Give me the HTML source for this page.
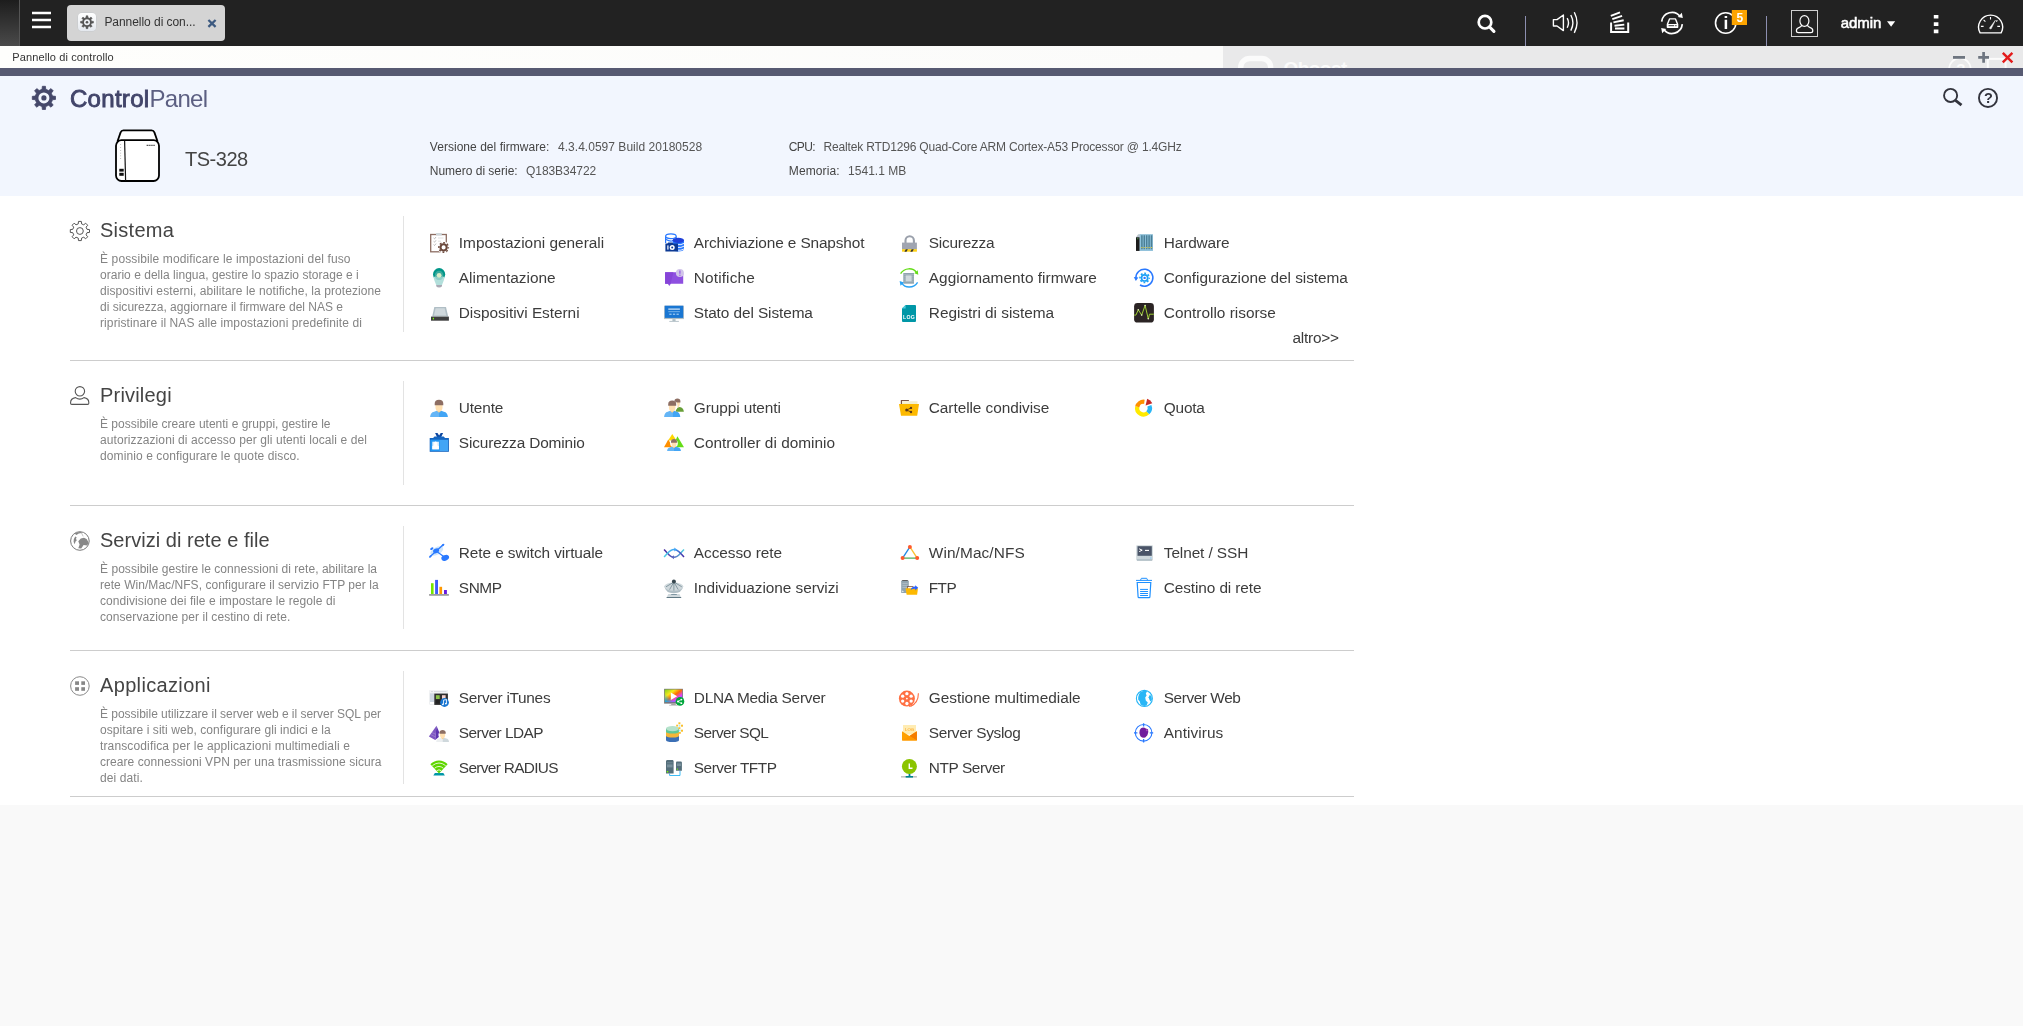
<!DOCTYPE html>
<html lang="it"><head><meta charset="utf-8"><title>Pannello di controllo</title>
<style>
html,body{margin:0;padding:0}
body{width:2023px;height:1026px;position:relative;overflow:hidden;background:#f9f9f9;font-family:"Liberation Sans",sans-serif}
.abs,.t,.ic,.vs,.hr{position:absolute}
.t{white-space:pre;line-height:20px}
#tx,#gx{left:0;top:0;width:2023px;height:1026px;will-change:transform}
.ic{overflow:visible}
.vs{left:403px;width:1px;background:#e3e3e3}
.hr{left:70px;width:1284px;height:1px;background:#cdcdcd}
#top{left:0;top:0;width:2023px;height:46px;background:#222}
#strip{left:0;top:0;width:20px;height:46px;background:linear-gradient(180deg,#1d1d1d,#4a4a4a);border-right:1px solid #555;box-sizing:border-box}
#tab{left:67px;top:5px;width:158px;height:36px;background:#d4d4d4;border-radius:4px}
#tabic{left:78px;top:13px;width:18px;height:18px;border-radius:4px;background:linear-gradient(#fff,#e4e8ee);box-shadow:0 0 0 .5px #c4c8cc}
#tbar{left:0;top:46px;width:2023px;height:22px;background:linear-gradient(90deg,#fefefc,#fbfbfa 60%,#f8f8f9)}
#tbarg{left:1223px;top:46px;width:800px;height:22px;background:#e9e9ea;overflow:hidden}
#band{left:0;top:68px;width:2023px;height:8px;background:#575a72}
#head{left:0;top:76px;width:2023px;height:120px;background:#f2f6fe}
#main{left:0;top:196px;width:2023px;height:609px;background:#fff}
.sepv{width:1px;height:30px;top:16px;background:#8d8fb0}
</style></head><body>
<div class="abs" id="top"></div><div class="abs" id="strip"></div>
<div class="abs" id="tab"></div><div class="abs" id="tabic"></div>
<div class="abs" id="tbar"></div><div class="abs" id="tbarg"><svg class="abs" style="left:0;top:0" width="800" height="22" viewBox="1223 46 800 22"><rect x="1240.700" y="58.500" width="30" height="26" rx="9" fill="none" stroke="#fbfbfb" stroke-width="5.400"/><circle cx="1959.900" cy="68.900" r="10.800" fill="none" stroke="#fbfbfb" stroke-width="1.800"/><rect x="1987.800" y="58.900" width="17.800" height="16" fill="none" stroke="#fbfbfb" stroke-width="2"/><rect x="1953" y="56" width="12" height="2.800" fill="#6e7580"/><path d="M1978.200 57.400h10.800M1983.600 52v10.800" stroke="#6e7580" stroke-width="2.700"/><path d="M2002.800 52.800l9.600 9.600M2012.400 52.800l-9.600 9.600" stroke="#e31b1b" stroke-width="2.400"/></svg><span class="t" style="left:60.500px;top:12.500px;font-size:19px;font-weight:700;color:#fbfbfb;letter-spacing:-.55px">Qboost</span><span class="t" style="left:733.200px;top:12.500px;font-size:15px;font-weight:700;color:#fbfbfb">?</span></div>
<div class="abs" id="band"></div><div class="abs" id="head"></div><div class="abs" id="main"></div>
<div class="abs sepv" style="left:1525px"></div><div class="abs sepv" style="left:1766px"></div>
<div class="vs" style="top:216px;height:116px"></div>
<div class="vs" style="top:381px;height:104px"></div>
<div class="vs" style="top:526px;height:103px"></div>
<div class="vs" style="top:671px;height:113px"></div>
<div class="hr" style="top:360px"></div>
<div class="hr" style="top:505px"></div>
<div class="hr" style="top:650px"></div>
<div class="hr" style="top:796px"></div>
<div class="abs" id="gx">
<svg class="abs" style="left:0;top:0" width="2023" height="46" viewBox="0 0 2023 46"><path d="M32 13h19M32 20h19M32 27h19" stroke="#fff" stroke-width="2.4"/><path d="M86.01 17.61L86.13 15.76L87.87 15.76L87.99 17.61L89.55 18.25L90.94 17.03L92.17 18.26L90.95 19.65L91.59 21.21L93.44 21.33L93.44 23.07L91.59 23.19L90.95 24.75L92.17 26.14L90.94 27.37L89.55 26.15L87.99 26.79L87.87 28.64L86.13 28.64L86.01 26.79L84.45 26.15L83.06 27.37L81.83 26.14L83.05 24.75L82.41 23.19L80.56 23.07L80.56 21.33L82.41 21.21L83.05 19.65L81.83 18.26L83.06 17.03L84.45 18.25z" fill="#555" stroke="#555" stroke-width=".5" stroke-linejoin="round"/><circle cx="87" cy="22.2" r="3" fill="#eef1f5"/><circle cx="87" cy="22.2" r="1.3" fill="#555"/><path d="M208.400 20l7.200 6.800M215.600 20l-7.200 6.800" stroke="#3d5a80" stroke-width="2.300"/><circle cx="1485" cy="22.200" r="6.300" fill="none" stroke="#fff" stroke-width="2.700"/><path d="M1489.600 27l4.300 4.400" stroke="#fff" stroke-width="3.200" stroke-linecap="round"/><path d="M1553.400 19.600h3.600l6.400-4.600v15.600l-6.400-4.600h-3.600z" fill="none" stroke="#fff" stroke-width="1.400" stroke-linejoin="round"/><path d="M1567.200 18.200q2.600 4.600 0 9.600M1570.800 15q4.200 7.800 0 15.600M1574.300 12.200q5.400 10.400 0 20.600" fill="none" stroke="#fff" stroke-width="1.400"/><path d="M1611.100 22.600v9.400h17.100v-9.400" fill="none" stroke="#fff" stroke-width="2"/><path d="M1615 28.500h9.400M1614.500 25.700l9.800-1.100M1613.400 22.400l10.300-2.200M1612.300 19.100l9.800-3.200M1610.800 15.800l9.200-3.500" stroke="#fff" stroke-width="1.900"/><path d="M1661.700 21.700a10.300 10.300 0 0 1 18.600-5M1682.300 24.200a10.300 10.300 0 0 1-18.600 5" fill="none" stroke="#fff" stroke-width="1.700"/><path d="M1677.800 17l5 .9-1-5.200z" fill="#fff"/><path d="M1666.200 28.900l-5-.9 1 5.200z" fill="#fff"/><path d="M1669.500 18.900h6l2.100 5.300v3.100h-10.200v-3.100z" fill="none" stroke="#fff" stroke-width="1.400" stroke-linejoin="round"/><rect x="1667.400" y="24" width="10.200" height="3.300" fill="#fff"/><path d="M1668.600 25.700h5.600M1675.200 25.700h1.400" stroke="#222" stroke-width=".9"/><circle cx="1725.700" cy="23" r="10.200" fill="none" stroke="#fff" stroke-width="1.600"/><path d="M1725.900 19.700v9.200M1725.900 16.100v2" stroke="#fff" stroke-width="2.500"/><rect x="1731.800" y="10" width="15.200" height="15" fill="#fda400"/><text x="1739.800" y="22" font-family="Liberation Sans,sans-serif" font-weight="700" font-size="12" fill="#fff" text-anchor="middle">5</text><rect x="1791.500" y="10.500" width="26" height="26" fill="none" stroke="#d0d0d0" stroke-width="1"/><ellipse cx="1804.400" cy="21" rx="4.500" ry="5.400" fill="none" stroke="#fff" stroke-width="1.200"/><path d="M1801.800 24.800q-.2 2-2.400 2.600-3 .9-3 3.400 0 1.900 2.200 1.900h12q2.200 0 2.200-1.900 0-2.500-3-3.400-2.200-.6-2.400-2.600" fill="none" stroke="#fff" stroke-width="1.200"/><path d="M1887 21.200h8.200l-4.100 5.500z" fill="#fff"/><path d="M1933.800 15h4.600v3.500h-4.600zM1933.800 22.300h4.600v3.600h-4.600zM1933.800 29.600h4.600v3.600h-4.600z" fill="#fff"/><path d="M1980.100 32.900A12 12 0 1 1 2001.100 32.900z" fill="none" stroke="#fff" stroke-width="1.400" stroke-linejoin="round"/><path d="M1989.400 28.200l1.600.9 4.400-8.900z" fill="#fff" stroke="#fff" stroke-width=".5"/><path d="M1990.500 16.900v2.500M1983.600 19.900l1.800 1.800M1980.900 26.400h2.700M1997.300 26.400h2.700M1997.400 20.300l-1.200 1.200" stroke="#fff" stroke-width="1.100"/></svg>
<svg class="abs" style="left:0;top:76px" width="2023" height="120" viewBox="0 76 2023 120"><path d="M42.05 89.30L42.34 86.30L45.46 86.30L45.75 89.30L48.67 90.51L51.00 88.60L53.20 90.80L51.29 93.13L52.50 96.05L55.50 96.34L55.50 99.46L52.50 99.75L51.29 102.67L53.20 105.00L51.00 107.20L48.67 105.29L45.75 106.50L45.46 109.50L42.34 109.50L42.05 106.50L39.13 105.29L36.80 107.20L34.60 105.00L36.51 102.67L35.30 99.75L32.30 99.46L32.30 96.34L35.30 96.05L36.51 93.13L34.60 90.80L36.80 88.60L39.13 90.51z" fill="#45486a" stroke="#45486a" stroke-width=".8" stroke-linejoin="round"/><circle cx="43.900" cy="97.900" r="5.500" fill="#f2f6fe"/><circle cx="43.900" cy="97.900" r="2.600" fill="#45486a"/><path d="M117.600 141l3-8.600q.8-2 2.800-2h28.200q2 0 2.800 2l3 8.600z" fill="#fff" stroke="#000" stroke-width="1.800" stroke-linejoin="round"/><rect x="116" y="140.200" width="43" height="40.800" rx="5.500" fill="#fff" stroke="#000" stroke-width="1.800"/><path d="M124.600 140.600l1 40.200" stroke="#111" stroke-width="1.200"/><rect x="119.300" y="168.800" width="4.400" height="2.800" fill="#111"/><rect x="119.300" y="172.800" width="4.400" height="3" fill="#111"/><path d="M120.600 144.400v.6M120.600 147.200v.6M120.600 150v.6M120.600 152.800v.6M120.600 155.600v.6M120.600 158.400v.6" stroke="#666" stroke-width=".7"/><path d="M146.600 145.400h8.400" stroke="#555" stroke-width="1.200" stroke-dasharray="1.400 .5"/><circle cx="1950.600" cy="95.400" r="6.550" fill="none" stroke="#33343d" stroke-width="1.900"/><path d="M1955.500 100.400l6 4.700" stroke="#33343d" stroke-width="2.800"/><circle cx="1988" cy="97.900" r="9.050" fill="none" stroke="#33343d" stroke-width="1.900"/><text x="1988.400" y="103" font-family="Liberation Sans,sans-serif" font-weight="700" font-size="14.500" fill="#33343d" text-anchor="middle">?</text></svg>
<svg class="ic" style="left:430px;top:233px" width="20" height="20" viewBox="0 0 20 20"><rect x="0.7" y="1.5" width="15.6" height="17.3" fill="#fff" stroke="#8d6e63" stroke-width="1.3"/><rect x="6" y="0" width="5.8" height="2.4" rx=".5" fill="#cfd8dc"/><path d="M3.6 5l.9.9 1.5-1.9M3.6 8.3l.9.9 1.5-1.9M3.6 11.6l.9.9 1.5-1.9" stroke="#9e9e9e" stroke-width=".7" fill="none"/><path d="M8 5h5.5M8 8.2h3" stroke="#dcdcdc" stroke-width=".9"/><circle cx="13.6" cy="14.4" r="6" fill="#fff"/><circle cx="13.6" cy="14.4" r="4.75" fill="none" stroke="#6a473a" stroke-width="1.50" stroke-dasharray="1.865 1.865" stroke-dashoffset="0.933"/><circle cx="13.6" cy="14.4" r="3.10" fill="none" stroke="#6a473a" stroke-width="2.10"/></svg>
<svg class="ic" style="left:665px;top:233px" width="20" height="20" viewBox="0 0 20 20"><path d="M.6 3.2v6.5h10.6V3.2z" fill="#fff"/><path d="M.6 3.2v6.8M11.2 3.2v2" stroke="#2979ff" stroke-width="1.2" fill="none"/><ellipse cx="5.9" cy="3.2" rx="5.3" ry="2.4" fill="#fff" stroke="#2979ff" stroke-width="1.2"/><path d="M.6 6.2q5 3 8 1.2" stroke="#2979ff" stroke-width="1.1" fill="none"/><path d="M7.6 7.2h11.4v9q-1 2.2-5.7 2.2t-5.7-2.2z" fill="#2979ff"/><ellipse cx="13.3" cy="7.3" rx="5.7" ry="2.6" fill="#1e3fd8"/><path d="M12.5 11.6q3.5 .6 6.5-1.2M12.5 14.4q3.5 .6 6.5-1.2M12.5 17.2q3.5 .6 6.5-1.2" stroke="#fff" stroke-width=".9" fill="none"/><path d="M.4 10.6h2l.8-1h4.2l.8 1h4.8v7.9H.4z" fill="#0d3a94"/><circle cx="7.2" cy="14.4" r="2.5" fill="#fff"/><circle cx="7.2" cy="14.4" r="1" fill="#0d3a94"/><rect x="2.3" y="12.4" width="1.2" height="4.2" fill="#fff"/></svg>
<svg class="ic" style="left:900px;top:233px" width="20" height="20" viewBox="0 0 20 20"><path d="M5.5 10V7.4a4.2 4.2 0 0 1 8.4 0V10" fill="none" stroke="#9aa0ab" stroke-width="2.1"/><rect x="2" y="9.6" width="14.9" height="6.8" fill="#a0a5b1"/><rect x="2" y="16.2" width="14.9" height="2.5" fill="#fdd017"/><path d="M4.4 18.7l1.4-2.5h2.1l-1.4 2.5zM10.3 18.7l1.4-2.5h2.1l-1.4 2.5z" fill="#333"/></svg>
<svg class="ic" style="left:1135px;top:233px" width="20" height="20" viewBox="0 0 20 20"><path d="M1 4.3l2.2-3h14.7v16.6H1z" fill="#b8c4cc"/><rect x="1" y="4.3" width="3.7" height="13.6" fill="#1c1c1c"/><rect x="2" y="5.4" width="1.5" height=".8" fill="#4caf50"/><rect x="4.7" y="1.3" width="13.2" height="16.6" fill="#8ec3dd"/><path d="M6.9 2.3v14M9.3 2.3v14M11.7 2.3v14M14.1 2.3v14M16.5 2.3v14" stroke="#4b7f96" stroke-width="1.5"/><path d="M6.3 14.6h1.2M8.7 14.6h1.2M11.1 14.6h1.2M13.5 14.6h1.2M15.9 14.6h1.2" stroke="#fdd835" stroke-width=".9"/></svg>
<svg class="ic" style="left:430px;top:268px" width="20" height="20" viewBox="0 0 20 20"><path d="M6.2 17h5.8v1.2q-1 1.4-2.9 1.4t-2.9-1.4z" fill="#a9a9b4"/><circle cx="9.1" cy="6.2" r="6.1" fill="#009688"/><circle cx="9.1" cy="7.1" r="4.3" fill="#3aa99d"/><path d="M3.4 8.7h11.4q-.5 3.2-2.800 8.300H6.200Q3.900 11.900 3.400 8.700z" fill="#b2dfdb"/><path d="M4.900 8.700a4.300 4.300 0 0 0 8.400 0z" fill="#8fd0c8"/><circle cx="9.1" cy="7.3" r="2.4" fill="#dcedc8"/></svg>
<svg class="ic" style="left:665px;top:268px" width="20" height="20" viewBox="0 0 20 20"><path d="M.1 4.3h18.1v11.4H5.8L4.3 18 2.8 15.7H.1z" fill="#8e4fe0"/><path d="M.1 4.3h8.3L5.6 15.7H.1z" fill="#8644d8"/><circle cx="14.9" cy="5" r="4" fill="#d1c4e9"/><path d="M14.9 2.6v3.2" stroke="#9a63e6" stroke-width="1.3"/><circle cx="14.9" cy="7.2" r=".7" fill="#9a63e6"/></svg>
<svg class="ic" style="left:900px;top:268px" width="20" height="20" viewBox="0 0 20 20"><rect x="3.3" y="5" width="10.7" height="10.7" fill="#90a4ae"/><path d="M3.3 6.5h10.7M3.3 8.3h10.7M3.3 10.1h10.7M3.3 11.9h10.7M3.3 13.7h10.7" stroke="#b0bec5" stroke-width=".6"/><rect x="5.7" y="7.4" width="5.9" height="5.9" fill="#cfd8dc"/><path d="M.6 5.6C4.5-.6 13-.6 16.6 4.6" fill="none" stroke="#64dd17" stroke-width="1.4"/><path d="M14.3 5.3l4 1.5-.6-4.6z" fill="#64dd17"/><path d="M17.6 14.3C13.5 20.6 5 20.4 1.8 15.2" fill="none" stroke="#29a3f5" stroke-width="1.4"/><path d="M4 14.4l-4.4-1.4.9 4.8z" fill="#29a3f5"/></svg>
<svg class="ic" style="left:1135px;top:268px" width="20" height="20" viewBox="0 0 20 20"><path d="M.9 10.2A8.5 8.5 0 1 1 5 17" fill="none" stroke="#2979ff" stroke-width="1.5"/><path d="M-1.2 9l4.6.4-2.6 3.6z" fill="#2979ff"/><circle cx="9.6" cy="9.9" r="4.60" fill="none" stroke="#1da1f5" stroke-width="1.60" stroke-dasharray="1.806 1.806" stroke-dashoffset="0.903"/><circle cx="9.6" cy="9.9" r="3.10" fill="none" stroke="#1da1f5" stroke-width="1.70"/><circle cx="9.6" cy="9.9" r="1.2" fill="#2979ff"/></svg>
<svg class="ic" style="left:430px;top:303px" width="20" height="20" viewBox="0 0 20 20"><path d="M4.3 3.9h11.7l2.2 9.7H2.2z" fill="#b0bec5"/><path d="M5.6 5.2h9.1l1.5 7.2H4z" fill="#cfd8dc"/><rect x="1" y="13.6" width="17.9" height="4.100" fill="#3f3f3f"/><rect x="2.8" y="14.8" width="1.2" height="1.6" fill="#76ff03"/></svg>
<svg class="ic" style="left:665px;top:303px" width="20" height="20" viewBox="0 0 20 20"><rect x="-.9" y="2.7" width="19.8" height="13.4" fill="#b0bec5"/><rect x="-.2" y="2.7" width="18.4" height="12.2" fill="#1976d2"/><path d="M3.3 6.1h11.6" stroke="#fff" stroke-width="1"/><path d="M3.3 8.6h11.6" stroke="#64a7e6" stroke-width="1.2"/><path d="M4.3 11.2h2.3M7.9 11.2h2.3M11.5 11.2h2.3" stroke="#bbdefb" stroke-width="1"/><rect x="7.4" y="16.1" width="3.2" height="2" fill="#b0bec5"/><rect x="4.3" y="17.9" width="9.6" height=".9" fill="#b0bec5"/></svg>
<svg class="ic" style="left:900px;top:303px" width="20" height="20" viewBox="0 0 20 20"><path d="M5.6 1.9h9.4a1 1 0 0 1 1 1v15a1 1 0 0 1-1 1H3a1 1 0 0 1-1-1V5.5z" fill="#0097a7"/><path d="M5.6 1.9v3.6H2z" fill="#4dd0e1"/><text x="9" y="15.6" font-family="Liberation Sans,sans-serif" font-weight="700" font-size="5.2" fill="#fff" text-anchor="middle" letter-spacing=".2">LOG</text></svg>
<svg class="ic" style="left:1135px;top:303px" width="20" height="20" viewBox="0 0 20 20"><rect x="-.9" y="0" width="19.8" height="19.6" rx="3.4" fill="#2b2424"/><path d="M-.9 12.1h1.8l2.4-5.3 3.4 5.3 3.4-9.7 3.2 13.6 1.2-4.8h4.4" fill="none" stroke="#9ccc33" stroke-width="1"/><g fill="#e6f5c0"><circle cx="3.3" cy="6.8" r=".8"/><circle cx="6.7" cy="12.1" r=".8"/><circle cx="10.1" cy="2.6" r=".8"/><circle cx="13.3" cy="15.8" r=".8"/></g></svg>
<svg class="ic" style="left:430px;top:398px" width="20" height="20" viewBox="0 0 20 20"><path d="M0.10 18.90q0.30 -4.65 4.00 -5.27l2.67 -0.93h2.23V18.90z" fill="#64b5f6"/><path d="M17.90 18.90q-0.30 -4.65 -4.00 -5.27l-2.67 -0.93h-2.23V18.90z" fill="#42a5f5"/><path d="M7.30 11.60h3.40v1.40l-1.70 1.80l-1.70 -1.80z" fill="#ffcc80"/><path d="M5.50 5.80q3.50 -1.40 7.00 0v3.40q0 4.20 -3.50 4.20t-3.50 -4.20z" fill="#ffe0b2"/><path d="M4.70 7.20v-1.60a4.30 3.90 0 0 1 8.60 0v1.60z" fill="#8d6e63"/></svg>
<svg class="ic" style="left:665px;top:398px" width="20" height="20" viewBox="0 0 20 20"><path d="M10.600 13.700q.3-4.300 4.100-4.800 3.800.5 4.200 4.800z" fill="#689f38"/><path d="M7.65 13.70q0.21 -3.82 2.14 -4.33l1.43 -0.76h1.19V13.70z" fill="none"/><path d="M17.15 13.70q-0.21 -3.82 -2.14 -4.33l-1.43 -0.76h-1.19V13.70z" fill="none"/><path d="M11.21 7.52h2.38v0.98l-1.19 1.26l-1.19 -1.26z" fill="#ffcc80"/><path d="M9.95 3.46q2.45 -0.98 4.90 0v2.38q0 2.94 -2.45 2.94t-2.45 -2.94z" fill="#ffe0b2"/><path d="M9.39 4.44v-1.12a3.01 2.73 0 0 1 6.02 0v1.12z" fill="#8d6e63"/><circle cx="7.2" cy="8" r="5.4" fill="#fff"/><path d="M-0.90 18.90q0.28 -4.65 3.65 -5.27l2.43 -0.93h2.02V18.90z" fill="#64b5f6"/><path d="M15.30 18.90q-0.28 -4.65 -3.65 -5.27l-2.43 -0.93h-2.02V18.90z" fill="#42a5f5"/><path d="M5.62 11.83h3.16v1.30l-1.58 1.67l-1.58 -1.67z" fill="#ffcc80"/><path d="M3.94 6.43q3.26 -1.30 6.51 0v3.16q0 3.91 -3.26 3.91t-3.26 -3.91z" fill="#ffe0b2"/><path d="M3.20 7.74v-1.49a4.00 3.63 0 0 1 8.00 0v1.49z" fill="#8d6e63"/></svg>
<svg class="ic" style="left:900px;top:398px" width="20" height="20" viewBox="0 0 20 20"><path d="M.8 2h8.1v5H.8z" fill="#795548"/><path d="M2 3.2h15.5v4H2z" fill="#f3efcf"/><path d="M2 3.2h6.9v1.2H2z" fill="#fff8e1"/><path d="M-1 6h20l-1.8 11.8H1z" fill="#fdb900"/><path d="M6.7 12l4.3-2.1M6.7 12l4.3 2" stroke="#5d3a1a" stroke-width=".9"/><circle cx="6.7" cy="12" r="1.5" fill="#5d3a1a"/><circle cx="11" cy="9.9" r="1.2" fill="#5d3a1a"/><circle cx="11" cy="14" r="1.2" fill="#5d3a1a"/></svg>
<svg class="ic" style="left:1135px;top:398px" width="20" height="20" viewBox="0 0 20 20"><path d="M12.83 14.74A6.35 6.35 0 0 1 2.29 8.78" fill="none" stroke="#ffea00" stroke-width="4.3"/><path d="M2.29 8.78A6.35 6.35 0 0 1 9.38 3.81" fill="none" stroke="#ff9100" stroke-width="4.3"/><path d="M14.39 7.72A6.35 6.35 0 0 1 12.83 14.74" fill="none" stroke="#29b6f6" stroke-width="4.3"/><path d="M10.6 7.4L12.2 .8A8.6 8.6 0 0 1 17.3 5.2z" fill="#c62828"/></svg>
<svg class="ic" style="left:430px;top:433px" width="20" height="20" viewBox="0 0 20 20"><path d="M5.1 0h2.4l1.6 2.6L10.7 0h2.4l-2 4.2 2.6 0 1.2 1.4H3.3l1.2-1.4h2.6z" fill="#0d47a1"/><path d="M4.5 3.4h9.2l1.6 1.8H2.9z" fill="#1565c0"/><rect x="-.3" y="5" width="19.2" height="13.8" fill="#1565c0"/><rect x=".6" y="6.8" width="17.4" height="11.2" fill="#42a5f5"/><rect x=".6" y="6.8" width="9" height="11.2" fill="#2196f3"/><rect x="2.3" y="8.7" width="6.6" height="7.6" fill="#e3f2fd"/><path d="M4.2 11a1.5 1.8 0 1 1 2.8 0v1.3l1.9 1v3H2.3v-3l1.9-1z" fill="#fff"/></svg>
<svg class="ic" style="left:665px;top:433px" width="20" height="20" viewBox="0 0 20 20"><path d="M7.3 1l4.2 6.4H3.1z" fill="#ffd600"/><path d="M3.3 6.6l4.6 7.6H-1z" fill="#ff8f00"/><path d="M12.4 3.2l6.6 11H7.6z" fill="#64dd17"/><circle cx="9" cy="10.4" r="3.8" fill="#fff"/><path d="M2.10 17.90q0.21 -3.22 3.11 -3.65l2.07 -0.64h1.73V17.90z" fill="#64b5f6"/><path d="M15.90 17.90q-0.21 -3.22 -3.11 -3.65l-2.07 -0.64h-1.73V17.90z" fill="#42a5f5"/><path d="M7.81 12.92h2.38v0.98l-1.19 1.26l-1.19 -1.26z" fill="#ffcc80"/><path d="M6.55 8.86q2.45 -0.98 4.90 0v2.38q0 2.94 -2.45 2.94t-2.45 -2.94z" fill="#ffe0b2"/><path d="M5.99 9.84v-1.12a3.01 2.73 0 0 1 6.02 0v1.12z" fill="#8d6e63"/></svg>
<svg class="ic" style="left:430px;top:543px" width="20" height="20" viewBox="0 0 20 20"><ellipse cx="6.8" cy="8" rx="7" ry="3.8" transform="rotate(-28 6.8 8)" fill="#cfe6fb"/><path d="M.2 13.6L13.2 1.8" stroke="#2979ff" stroke-width="1.3"/><path d="M6.1 7.9L15 14.4" stroke="#2979ff" stroke-width="1.2"/><ellipse cx="6.1" cy="7.8" rx="3.1" ry="2.3" transform="rotate(-28 6.1 7.8)" fill="#2979ff"/><ellipse cx="15.2" cy="14.8" rx="4" ry="2.8" transform="rotate(-22 15.2 14.8)" fill="#2979ff"/><ellipse cx="1.8" cy="5.6" rx="1.8" ry="1.1" transform="rotate(-35 1.8 5.6)" fill="#2979ff"/><ellipse cx="13" cy="2" rx="1.6" ry="1" transform="rotate(-40 13 2)" fill="#2979ff"/><ellipse cx=".3" cy="13.5" rx="1.5" ry=".9" transform="rotate(-40 .3 13.5)" fill="#2979ff"/></svg>
<svg class="ic" style="left:665px;top:543px" width="20" height="20" viewBox="0 0 20 20"><defs><linearGradient id="ga" x1="0" x2="1"><stop offset="0" stop-color="#4527a0"/><stop offset=".5" stop-color="#5c6bc0"/><stop offset="1" stop-color="#4dd0e1"/></linearGradient><linearGradient id="gb" x1="0" x2="1"><stop offset="0" stop-color="#4dd0e1"/><stop offset=".5" stop-color="#42a5f5"/><stop offset="1" stop-color="#4527a0"/></linearGradient></defs><path d="M-.9 6.400L2.500 10.200C5 13 6.500 14.300 9 14.300S13 13 15.500 10.200L19 6.400" fill="none" stroke="url(#ga)" stroke-width="1.500"/><path d="M-.9 14L2.500 10.200C5 7.400 6.500 6.400 9 6.400S13 7.400 15.500 10.200L19 14" fill="none" stroke="url(#gb)" stroke-width="1.500"/><path d="M9.300 4.400l2.600 2.100-2.600 1.900z" fill="#42a5f5"/><path d="M9 12.300l-2.600 2L9 16.200z" fill="#5c6bc0"/></svg>
<svg class="ic" style="left:900px;top:543px" width="20" height="20" viewBox="0 0 20 20"><path d="M9.9 3.9L2.6 15.1" stroke="#1e88e5" stroke-width="1.3"/><path d="M9.9 3.9l7.3 11.2" stroke="#fbc02d" stroke-width="1.3"/><path d="M2.6 15.1h14.6" stroke="#34a045" stroke-width="1.1"/><g fill="#ff5a2c"><circle cx="9.9" cy="3.9" r="2"/><circle cx="2.6" cy="15.1" r="2"/><circle cx="17.2" cy="15.1" r="2"/></g></svg>
<svg class="ic" style="left:1135px;top:543px" width="20" height="20" viewBox="0 0 20 20"><rect x="1.2" y="2.3" width="16.7" height="15.2" rx=".8" fill="#cfd8dc"/><rect x="2" y="16.6" width="15.1" height=".9" fill="#90a4ae"/><rect x="2.5" y="3.2" width="14.3" height="9.6" fill="#4a5468"/><path d="M4.2 5.8l3 1.4-3 1.4" stroke="#fff" stroke-width="1" fill="none"/><path d="M10 7.4h4" stroke="#fff" stroke-width="1.1"/><rect x="15" y="14.4" width="1.4" height="1.2" fill="#90caf9"/></svg>
<svg class="ic" style="left:430px;top:578px" width="20" height="20" viewBox="0 0 20 20"><rect x="-.9" y="16" width="19.8" height="1.8" fill="#9e9e9e"/><rect x="1" y="5.2" width="2.6" height="10.8" fill="#76e600"/><rect x="5.1" y="1.9" width="2.9" height="14.1" fill="#3d5afe"/><rect x="9.4" y="8.8" width="2.7" height="7.2" fill="#ff9800"/><rect x="14" y="12" width="2.9" height="4" fill="#6a1be0"/></svg>
<svg class="ic" style="left:665px;top:578px" width="20" height="20" viewBox="0 0 20 20"><path d="M1.6 19.8l1.7-3.8h11.2l1.7 3.8z" fill="#cfd8dc"/><rect x="1.6" y="19" width="14.6" height=".9" fill="#546e7a"/><rect x="6.2" y="16" width="5.6" height=".9" fill="#78909c"/><path d="M-.7 8.2Q.6 15.2 8.8 15.2T18.2 8.2z" fill="#b0bec5"/><ellipse cx="8.8" cy="8.6" rx="9.5" ry="4.2" fill="#cfd8dc"/><path d="M8.9 4v8.6M8.9 4L1 8.8M8.9 4L4.6 11.6M8.9 4l4.3 7.6M8.9 4l7.9 4.8" stroke="#546e7a" stroke-width=".6" fill="none"/><circle cx="8.9" cy="3.6" r="2" fill="#37474f"/></svg>
<svg class="ic" style="left:900px;top:578px" width="20" height="20" viewBox="0 0 20 20"><rect x="1.2" y="2.6" width="7.6" height="12.4" rx=".6" fill="#90a4ae"/><rect x="2.2" y="2" width="5.6" height="1" fill="#616161"/><path d="M2.4 5.4h5.2M2.4 7.4h5.2M2.4 9.4h5.2" stroke="#b0bec5" stroke-width="1"/><path d="M2.3 12.6l1.5.8-1.5.8z" fill="#fff"/><path d="M7 8.2h6.4v3H7z" fill="#795548"/><path d="M7.8 9h5v2h-5z" fill="#fff3e0"/><path d="M5.6 10.2h12.4l-.9 6.5H6.6z" fill="#fdb900"/><path d="M10.6 12q.8-3.2 4.6-3.4V7.2l3 2.6-3 2.6v-1.6q-2.6-.2-4.6 1.2z" fill="#2962ff"/></svg>
<svg class="ic" style="left:1135px;top:578px" width="20" height="20" viewBox="0 0 20 20"><path d="M1 2.4h16M5.4 2.4l1-2.1h5.3l1 2.1" fill="none" stroke="#1e90ff" stroke-width="1"/><path d="M2.2 4.5h13.6l-.9 14.2q0 .9-.9.9H4q-.9 0-.9-.9z" fill="none" stroke="#1e90ff" stroke-width="1.2"/><path d="M5.1 11.4h7.9M5.1 13.5h7.9M5.1 15.5h7.9M5.1 17.5h7.9" stroke="#1e90ff" stroke-width="1"/></svg>
<svg class="ic" style="left:430px;top:688px" width="20" height="20" viewBox="0 0 20 20"><rect x="-.6" y="2" width="18.5" height="14.9" rx=".8" fill="#e3e6ea"/><rect x="-.6" y="2" width="18.5" height="3" rx=".8" fill="#f3f4f6"/><path d="M1 3.6h2M4 3.6h12.5" stroke="#c5cad0" stroke-width=".6"/><rect x="0" y="5.6" width="4.2" height="8.4" fill="#cfd8e3"/><rect x="0" y="14" width="4.2" height="2.4" fill="#fff"/><rect x="4.3" y="5.6" width="13.6" height="11.3" fill="#2f2f2f"/><rect x="5.9" y="7.2" width="3.8" height="3.8" fill="#8bc34a"/><rect x="12" y="7.2" width="3.6" height="3.8" fill="#f3d2cf"/><rect x="5.9" y="12" width="3.8" height="3.4" fill="#222"/><circle cx="14.5" cy="14.5" r="4.4" fill="#1976d2"/><path d="M13.5 16.2v-4l3-.7v4" fill="none" stroke="#fff" stroke-width=".8"/><circle cx="12.9" cy="16.3" r=".9" fill="#fff"/><circle cx="15.9" cy="15.6" r=".9" fill="#fff"/></svg>
<svg class="ic" style="left:665px;top:688px" width="20" height="20" viewBox="0 0 20 20"><defs><linearGradient id="gd" x1="0" y1="0" x2="1" y2="1"><stop offset="0" stop-color="#7ed321"/><stop offset=".3" stop-color="#f8e71c"/><stop offset=".5" stop-color="#ff6d00"/><stop offset=".7" stop-color="#e040fb"/><stop offset="1" stop-color="#00b0ff"/></linearGradient><linearGradient id="gd2" x1="0" y1="1" x2="1" y2="0"><stop offset="0" stop-color="#00b0ff"/><stop offset=".35" stop-color="#00b0ff" stop-opacity="0"/></linearGradient></defs><rect x="-.9" y=".8" width="18.8" height="14.8" fill="#757575"/><rect x="-.2" y="1.5" width="17.4" height="12.6" fill="url(#gd)"/><rect x="-.2" y="1.5" width="17.4" height="12.6" fill="url(#gd2)"/><path d="M5.8 4.4l6.400 3.800-6.400 3.800z" fill="#fff"/><rect x="6.200" y="15.600" width="4.600" height="1.400" fill="#9e9e9e"/><rect x="4.200" y="16.800" width="8.600" height=".9" fill="#bdbdbd"/><circle cx="15" cy="13.400" r="4.300" fill="#00a63c"/><path d="M13 13.400l3.200-1.800M13 13.400l3.200 1.800" stroke="#fff" stroke-width=".7"/><circle cx="13" cy="13.400" r="1" fill="#fff"/><circle cx="16.400" cy="11.600" r=".9" fill="#fff"/><circle cx="16.400" cy="15.200" r=".9" fill="#fff"/></svg>
<svg class="ic" style="left:900px;top:688px" width="20" height="20" viewBox="0 0 20 20"><circle cx="6.900" cy="10.600" r="8" fill="#ff7043"/><g fill="#fff"><circle cx="6.90" cy="5.70" r="1.65"/><circle cx="11.14" cy="8.15" r="1.65"/><circle cx="11.14" cy="13.05" r="1.65"/><circle cx="6.90" cy="15.50" r="1.65"/><circle cx="2.66" cy="13.05" r="1.65"/><circle cx="2.66" cy="8.15" r="1.65"/><circle cx="6.900" cy="10.600" r=".9"/></g><path d="M10.500 18.200Q18.400 15 18.400 5.200" fill="none" stroke="#ff7043" stroke-width="1.100"/><path d="M9 18.600q3.500-.4 5.500-2.600" fill="none" stroke="#ff7043" stroke-width=".8"/></svg>
<svg class="ic" style="left:1135px;top:688px" width="20" height="20" viewBox="0 0 20 20"><circle cx="9.400" cy="10.400" r="8" fill="#fff" stroke="#29b6f6" stroke-width="1.100"/><path d="M5.200 4.200Q9 1.800 12.200 3.200L10.800 5.400l.8 2.200-1.400 1.800.6 3 2 2.200-1.200 3Q8 18.600 5.600 16.600l-.8-3.200-1.600-1.800Q3 8.600 4 6.600z" fill="#29b6f6"/><path d="M14.800 6.800l1.800 1.800.3 3.400-1.500 1.600-1-2-.8-2.400z" fill="#29b6f6"/></svg>
<svg class="ic" style="left:430px;top:723px" width="20" height="20" viewBox="0 0 20 20"><path d="M6.5 2.8L-1.1 13.4 5.2 17z" fill="#7e57c2"/><path d="M6.5 2.8L5.2 17l5.4-4.4z" fill="#5e35b1"/><path d="M2 9.6l3.6 1.6M.6 11.6l4.8 2.2" stroke="#b39ddb" stroke-width=".5"/><circle cx="12.6" cy="12" r="4.2" fill="#fff"/><path d="M6.20 18.90q0.22 -3.07 2.88 -3.48l1.92 -0.61h1.60V18.90z" fill="#eceff1"/><path d="M19.00 18.90q-0.22 -3.07 -2.88 -3.48l-1.92 -0.61h-1.60V18.90z" fill="#cfd8dc"/><path d="M11.38 13.91h2.45v1.01l-1.22 1.30l-1.22 -1.30z" fill="#ffcc80"/><path d="M10.08 9.74q2.52 -1.01 5.04 0v2.45q0 3.02 -2.52 3.02t-2.52 -3.02z" fill="#ffe0b2"/><path d="M9.50 10.74v-1.15a3.10 2.81 0 0 1 6.19 0v1.15z" fill="#8d6e63"/></svg>
<svg class="ic" style="left:665px;top:723px" width="20" height="20" viewBox="0 0 20 20"><path d="M1 13v3.900q0 2 6.500 2t6.500-2V13z" fill="#3b6fb5"/><path d="M1 9v3.500q0 2 6.500 2t6.500-2V9z" fill="#f5b638"/><path d="M1 5.600v3q0 2 6.500 2t6.500-2v-3z" fill="#5fc795"/><ellipse cx="7.500" cy="5.600" rx="6.500" ry="2.700" fill="#b5e2cb"/><g fill="#fbc02d"><rect x="13.400" y="-.7" width="2" height="2" transform="rotate(0)"/><rect x="16" y="1.700" width="2" height="2"/><rect x="13.400" y="4.200" width="2" height="2"/><rect x="16" y="6.700" width="2" height="2"/><rect x="11.200" y="1.700" width="1.800" height="1.800"/><rect x="14" y="9" width="1.800" height="1.800"/></g><g fill="#b3e5fc"><rect x="13.600" y="1.900" width="1.800" height="1.800"/><rect x="13.800" y="6.700" width="1.800" height="1.800"/></g></svg>
<svg class="ic" style="left:900px;top:723px" width="20" height="20" viewBox="0 0 20 20"><rect x="3" y="2" width="13" height="9.500" fill="#ffecb3"/><text x="9.500" y="8" font-family="Liberation Sans,sans-serif" font-size="4.200" fill="#ff9800" text-anchor="middle">LOG</text><path d="M2 8.200l7.450 4.800 7.450-4.800v9.400H2z" fill="#ffa000"/><path d="M16.900 8.200v9.400L9.450 13z" fill="#f57c00"/><path d="M2 17.600l7.450-4.600 7.450 4.600z" fill="#ff9800"/></svg>
<svg class="ic" style="left:1135px;top:723px" width="20" height="20" viewBox="0 0 20 20"><circle cx="8.600" cy="9.850" r="8.300" fill="none" stroke="#2979ff" stroke-width="1.100"/><path d="M8.600 .2v3.400M8.600 16.100v3.400M-1 9.850h3.400M14.800 9.850h3.400" stroke="#2979ff" stroke-width="1.300"/><path d="M6 5.200q2.800-1.600 4.800.4l2.200.6q1 3.200-.6 6l-2.200 2.400q-2.800.6-4.800-1.400-1.800-3-.6-6.200z" fill="#701c9c"/><circle cx="11.800" cy="7.200" r="1" fill="#ab47bc"/></svg>
<svg class="ic" style="left:430px;top:758px" width="20" height="20" viewBox="0 0 20 20"><path d="M3.3 17.5l1.6-2.6h8.4l1.6 2.6z" fill="#0097a7"/><path d="M9 15.6L.4 6.2Q4 2.4 9 2.4t8.6 3.8z" fill="#5fd600"/><path d="M2.4 7.6q6.600-5.200 13.200 0M4.600 10.200q4.400-3.500 8.800 0M6.800 12.700q2.200-1.800 4.400 0" fill="none" stroke="#fff" stroke-width=".8"/></svg>
<svg class="ic" style="left:665px;top:758px" width="20" height="20" viewBox="0 0 20 20"><path d="M4.600 15.600v1.900h10.400v-4.800" fill="none" stroke="#29b6f6" stroke-width=".9"/><path d="M1.800 2.100h6l.8 1v12.500H1v-12.500z" fill="#546e7a"/><path d="M2 4.800h5.600" stroke="#78909c" stroke-width=".8"/><rect x="2" y="6.400" width="5.600" height="3" fill="#78909c"/><rect x="1.800" y="13" width="1.400" height="1.400" fill="#76ff03"/><path d="M11.600 3.400h4.600l.7 .8v8.500H11v-8.500z" fill="#546e7a"/><rect x="11.900" y="5.400" width="4.100" height="2.600" fill="#78909c"/><rect x="11.800" y="10.600" width="1.100" height="1.100" fill="#76ff03"/></svg>
<svg class="ic" style="left:900px;top:758px" width="20" height="20" viewBox="0 0 20 20"><rect x="1" y="18" width="15.900" height="1.600" fill="#c4c4c4"/><rect x="5.700" y="18" width="7.300" height="1.600" fill="#00838f"/><rect x="8.600" y="15.600" width="1.800" height="2.500" fill="#00838f"/><circle cx="9.400" cy="8.500" r="7.500" fill="#8bc400"/><path d="M9.300 5.400v4.800h3.200" fill="none" stroke="#fff" stroke-width="1.400"/></svg>
<svg class="ic" style="left:70px;top:221px" width="20" height="20" viewBox="0 0 20 20"><path d="M8.25 2.89L8.46 0.41L11.34 0.41L11.55 2.89L13.76 3.81L15.66 2.20L17.70 4.24L16.09 6.14L17.01 8.35L19.49 8.56L19.49 11.44L17.01 11.65L16.09 13.86L17.70 15.76L15.66 17.80L13.76 16.19L11.55 17.11L11.34 19.59L8.46 19.59L8.25 17.11L6.04 16.19L4.14 17.80L2.10 15.76L3.71 13.86L2.79 11.65L0.31 11.44L0.31 8.56L2.79 8.35L3.71 6.14L2.10 4.24L4.14 2.20L6.04 3.81z" fill="none" stroke="#555" stroke-width="1.0" stroke-linejoin="round"/><circle cx="9.900" cy="10" r="3.400" fill="none" stroke="#555" stroke-width="1"/></svg>
<svg class="ic" style="left:70px;top:386px" width="20" height="20" viewBox="0 0 20 20"><circle cx="9.900" cy="5.300" r="4.700" fill="none" stroke="#555" stroke-width="1.100"/><path d="M5.600 11.600Q.6 12.400.6 16.400v.8q0 1.200 1.200 1.200h15.800q1.200 0 1.200-1.200v-.8q0-4-4.800-4.800-2 1.500-4.200 1.500t-4.200-1.500z" fill="none" stroke="#555" stroke-width="1.100"/></svg>
<svg class="ic" style="left:70px;top:531px" width="20" height="20" viewBox="0 0 20 20"><circle cx="9.900" cy="10" r="9.300" fill="#fff" stroke="#777" stroke-width="1"/><path d="M4.400 2.600q3-2 6.600-1.600l.8 1-3 .4-2.400 1.600z" fill="#888"/><path d="M5.200 5.600l1.400.6-.6 1.800.8 1.200-1.400 1.600-.6 2.400-1.200-2.200.2-2.800z" fill="#888"/><path d="M8.300 10.200l2.500-2.600 3.200-.8 2.600 1.200 1.500 2.400.2 2.400-1.200 1.800-3.500-.6-2.400 3.600-2.900-.4 1.300-3.600z" fill="#888"/><path d="M11 1l2.200 4.400M16 14q1.200-1.200 2-3" stroke="#888" stroke-width=".5" fill="none"/></svg>
<svg class="ic" style="left:70px;top:676px" width="20" height="20" viewBox="0 0 20 20"><circle cx="9.900" cy="10" r="9.300" fill="#fff" stroke="#888" stroke-width="1"/><g fill="#888"><rect x="5.100" y="5.300" width="3.900" height="3.600"/><rect x="11.300" y="5.300" width="3.700" height="3.600"/><rect x="5.100" y="11.200" width="3.900" height="3.600"/><rect x="11.300" y="11.200" width="3.700" height="3.600"/></g></svg>
</div>
<div class="abs" id="tx">
<span class="t" style="left:104.4px;top:12.0px;font-size:12px;letter-spacing:-0.047px;color:#333">Pannello di con...</span>
<span class="t" style="left:12.3px;top:47.0px;font-size:11px;letter-spacing:0.117px;color:#333">Pannello di controllo</span>
<span class="t" style="left:1840.8px;top:12.5px;font-size:15px;letter-spacing:-0.092px;color:#fff;-webkit-text-stroke:.55px #fff">admin</span>
<span class="t" style="left:70.0px;top:88.9px;font-size:24px;letter-spacing:0.289px;color:#42456a;-webkit-text-stroke:.9px #42456a">Control</span>
<span class="t" style="left:149.4px;top:88.9px;font-size:24px;letter-spacing:-0.678px;color:#5c5f82">Panel</span>
<span class="t" style="left:184.9px;top:148.8px;font-size:20px;letter-spacing:-0.448px;color:#444">TS-328</span>
<span class="t" style="left:429.8px;top:136.9px;font-size:12px;letter-spacing:0.035px;color:#444">Versione del firmware:</span>
<span class="t" style="left:558.0px;top:136.9px;font-size:12px;letter-spacing:0.028px;color:#555">4.3.4.0597 Build 20180528</span>
<span class="t" style="left:429.8px;top:160.9px;font-size:12px;letter-spacing:-0.012px;color:#444">Numero di serie:</span>
<span class="t" style="left:526.0px;top:160.9px;font-size:12px;letter-spacing:-0.063px;color:#555">Q183B34722</span>
<span class="t" style="left:788.8px;top:136.9px;font-size:12px;letter-spacing:-0.609px;color:#444">CPU:</span>
<span class="t" style="left:823.6px;top:136.9px;font-size:12px;letter-spacing:-0.172px;color:#555">Realtek RTD1296 Quad-Core ARM Cortex-A53 Processor @ 1.4GHz</span>
<span class="t" style="left:788.8px;top:160.9px;font-size:12px;letter-spacing:0.114px;color:#444">Memoria:</span>
<span class="t" style="left:848.1px;top:160.9px;font-size:12px;letter-spacing:0.014px;color:#555">1541.1 MB</span>
<span class="t" style="left:100.0px;top:220.0px;font-size:20px;letter-spacing:0.263px;color:#444">Sistema</span>
<span class="t" style="left:100.0px;top:249.2px;font-size:12px;letter-spacing:0.124px;color:#848484">È possibile modificare le impostazioni del fuso</span>
<span class="t" style="left:100.0px;top:265.2px;font-size:12px;letter-spacing:0.023px;color:#848484">orario e della lingua, gestire lo spazio storage e i</span>
<span class="t" style="left:100.0px;top:281.2px;font-size:12px;letter-spacing:0.085px;color:#848484">dispositivi esterni, abilitare le notifiche, la protezione</span>
<span class="t" style="left:100.0px;top:297.2px;font-size:12px;letter-spacing:0.006px;color:#848484">di sicurezza, aggiornare il firmware del NAS e</span>
<span class="t" style="left:100.0px;top:313.2px;font-size:12px;letter-spacing:0.099px;color:#848484">ripristinare il NAS alle impostazioni predefinite di</span>
<span class="t" style="left:458.8px;top:232.5px;font-size:15.4px;letter-spacing:-0.005px;color:#3c3c3c">Impostazioni generali</span>
<span class="t" style="left:693.8px;top:232.5px;font-size:15.4px;letter-spacing:-0.129px;color:#3c3c3c">Archiviazione e Snapshot</span>
<span class="t" style="left:928.8px;top:232.5px;font-size:15.4px;letter-spacing:-0.220px;color:#3c3c3c">Sicurezza</span>
<span class="t" style="left:1163.8px;top:232.5px;font-size:15.4px;letter-spacing:-0.145px;color:#3c3c3c">Hardware</span>
<span class="t" style="left:458.8px;top:267.5px;font-size:15.4px;letter-spacing:0.013px;color:#3c3c3c">Alimentazione</span>
<span class="t" style="left:693.8px;top:267.5px;font-size:15.4px;letter-spacing:0.135px;color:#3c3c3c">Notifiche</span>
<span class="t" style="left:928.8px;top:267.5px;font-size:15.4px;letter-spacing:0.022px;color:#3c3c3c">Aggiornamento firmware</span>
<span class="t" style="left:1163.8px;top:267.5px;font-size:15.4px;letter-spacing:-0.065px;color:#3c3c3c">Configurazione del sistema</span>
<span class="t" style="left:458.8px;top:302.5px;font-size:15.4px;letter-spacing:-0.039px;color:#3c3c3c">Dispositivi Esterni</span>
<span class="t" style="left:693.8px;top:302.5px;font-size:15.4px;letter-spacing:-0.094px;color:#3c3c3c">Stato del Sistema</span>
<span class="t" style="left:928.8px;top:302.5px;font-size:15.4px;letter-spacing:-0.019px;color:#3c3c3c">Registri di sistema</span>
<span class="t" style="left:1163.8px;top:302.5px;font-size:15.4px;letter-spacing:-0.001px;color:#3c3c3c">Controllo risorse</span>
<span class="t" style="left:100.0px;top:385.0px;font-size:20px;letter-spacing:0.195px;color:#444">Privilegi</span>
<span class="t" style="left:100.0px;top:414.2px;font-size:12px;letter-spacing:0.009px;color:#848484">È possibile creare utenti e gruppi, gestire le</span>
<span class="t" style="left:100.0px;top:430.2px;font-size:12px;letter-spacing:0.092px;color:#848484">autorizzazioni di accesso per gli utenti locali e del</span>
<span class="t" style="left:100.0px;top:446.2px;font-size:12px;letter-spacing:0.097px;color:#848484">dominio e configurare le quote disco.</span>
<span class="t" style="left:458.8px;top:397.5px;font-size:15.4px;letter-spacing:-0.161px;color:#3c3c3c">Utente</span>
<span class="t" style="left:693.8px;top:397.5px;font-size:15.4px;letter-spacing:-0.083px;color:#3c3c3c">Gruppi utenti</span>
<span class="t" style="left:928.8px;top:397.5px;font-size:15.4px;letter-spacing:-0.061px;color:#3c3c3c">Cartelle condivise</span>
<span class="t" style="left:1163.8px;top:397.5px;font-size:15.4px;letter-spacing:-0.223px;color:#3c3c3c">Quota</span>
<span class="t" style="left:458.8px;top:432.5px;font-size:15.4px;letter-spacing:-0.142px;color:#3c3c3c">Sicurezza Dominio</span>
<span class="t" style="left:693.8px;top:432.5px;font-size:15.4px;letter-spacing:0.006px;color:#3c3c3c">Controller di dominio</span>
<span class="t" style="left:100.0px;top:530.0px;font-size:20px;letter-spacing:0.028px;color:#444">Servizi di rete e file</span>
<span class="t" style="left:100.0px;top:559.2px;font-size:12px;letter-spacing:0.040px;color:#848484">È possibile gestire le connessioni di rete, abilitare la</span>
<span class="t" style="left:100.0px;top:575.2px;font-size:12px;letter-spacing:0.040px;color:#848484">rete Win/Mac/NFS, configurare il servizio FTP per la</span>
<span class="t" style="left:100.0px;top:591.2px;font-size:12px;letter-spacing:0.072px;color:#848484">condivisione dei file e impostare le regole di</span>
<span class="t" style="left:100.0px;top:607.2px;font-size:12px;letter-spacing:0.061px;color:#848484">conservazione per il cestino di rete.</span>
<span class="t" style="left:458.8px;top:542.5px;font-size:15.4px;letter-spacing:-0.091px;color:#3c3c3c">Rete e switch virtuale</span>
<span class="t" style="left:693.8px;top:542.5px;font-size:15.4px;letter-spacing:-0.058px;color:#3c3c3c">Accesso rete</span>
<span class="t" style="left:928.8px;top:542.5px;font-size:15.4px;letter-spacing:0.102px;color:#3c3c3c">Win/Mac/NFS</span>
<span class="t" style="left:1163.8px;top:542.5px;font-size:15.4px;letter-spacing:-0.098px;color:#3c3c3c">Telnet / SSH</span>
<span class="t" style="left:458.8px;top:577.5px;font-size:15.4px;letter-spacing:-0.416px;color:#3c3c3c">SNMP</span>
<span class="t" style="left:693.8px;top:577.5px;font-size:15.4px;letter-spacing:-0.062px;color:#3c3c3c">Individuazione servizi</span>
<span class="t" style="left:928.8px;top:577.5px;font-size:15.4px;letter-spacing:-0.605px;color:#3c3c3c">FTP</span>
<span class="t" style="left:1163.8px;top:577.5px;font-size:15.4px;letter-spacing:-0.109px;color:#3c3c3c">Cestino di rete</span>
<span class="t" style="left:100.0px;top:675.0px;font-size:20px;letter-spacing:0.344px;color:#444">Applicazioni</span>
<span class="t" style="left:100.0px;top:704.2px;font-size:12px;letter-spacing:-0.023px;color:#848484">È possibile utilizzare il server web e il server SQL per</span>
<span class="t" style="left:100.0px;top:720.2px;font-size:12px;letter-spacing:0.071px;color:#848484">ospitare i siti web, configurare gli indici e la</span>
<span class="t" style="left:100.0px;top:736.2px;font-size:12px;letter-spacing:0.137px;color:#848484">transcodifica per le applicazioni multimediali e</span>
<span class="t" style="left:100.0px;top:752.2px;font-size:12px;letter-spacing:0.054px;color:#848484">creare connessioni VPN per una trasmissione sicura</span>
<span class="t" style="left:100.0px;top:768.2px;font-size:12px;letter-spacing:0.094px;color:#848484">dei dati.</span>
<span class="t" style="left:458.8px;top:687.5px;font-size:15.4px;letter-spacing:-0.287px;color:#3c3c3c">Server iTunes</span>
<span class="t" style="left:693.8px;top:687.5px;font-size:15.4px;letter-spacing:-0.263px;color:#3c3c3c">DLNA Media Server</span>
<span class="t" style="left:928.8px;top:687.5px;font-size:15.4px;letter-spacing:-0.021px;color:#3c3c3c">Gestione multimediale</span>
<span class="t" style="left:1163.8px;top:687.5px;font-size:15.4px;letter-spacing:-0.438px;color:#3c3c3c">Server Web</span>
<span class="t" style="left:458.8px;top:722.5px;font-size:15.4px;letter-spacing:-0.503px;color:#3c3c3c">Server LDAP</span>
<span class="t" style="left:693.8px;top:722.5px;font-size:15.4px;letter-spacing:-0.599px;color:#3c3c3c">Server SQL</span>
<span class="t" style="left:928.8px;top:722.5px;font-size:15.4px;letter-spacing:-0.314px;color:#3c3c3c">Server Syslog</span>
<span class="t" style="left:1163.8px;top:722.5px;font-size:15.4px;letter-spacing:0.056px;color:#3c3c3c">Antivirus</span>
<span class="t" style="left:458.8px;top:757.5px;font-size:15.4px;letter-spacing:-0.670px;color:#3c3c3c">Server RADIUS</span>
<span class="t" style="left:693.8px;top:757.5px;font-size:15.4px;letter-spacing:-0.461px;color:#3c3c3c">Server TFTP</span>
<span class="t" style="left:928.8px;top:757.5px;font-size:15.4px;letter-spacing:-0.408px;color:#3c3c3c">NTP Server</span>
<span class="t" style="left:1292.4px;top:327.5px;font-size:15.4px;letter-spacing:-0.209px;color:#3c3c3c">altro&gt;&gt;</span>
</div>
</body></html>
